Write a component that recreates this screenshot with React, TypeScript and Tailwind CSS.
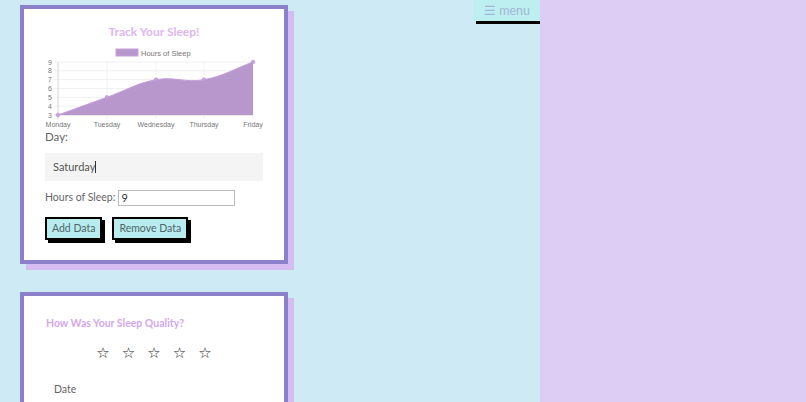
import React from 'react';

const days = ['Monday', 'Tuesday', 'Wednesday', 'Thursday', 'Friday'];
const xs = [13, 62, 111, 159, 208];
const yOf = (v: number) => 73 - (v - 3) * (53 / 6);
const hours = [3, 5, 7, 7, 9];

function SleepChart() {
  const area =
    'M13,73 C32.6,65.9 42.4,62.4 62,55.3 C81.6,48.2 90.8,41.4 111,37.7 C129.6,34.3 140.4,41.1 159,37.7 C179.2,34 188.4,27.1 208,20';
  return (
    <svg width="218" height="90" viewBox="0 0 218 90" className="block" style={{ fontFamily: '"Liberation Sans", Arial, sans-serif' }}>
      {/* legend */}
      <rect x="71" y="7" width="22" height="7" fill="#b897cc" stroke="#c6a3dc" strokeWidth="1" />
      <text x="96" y="13.5" fontSize="7.5" fill="#777">Hours of Sleep</text>

      {/* grid */}
      {[3, 4, 5, 6, 7, 8, 9].map(v => (
        <g key={v}>
          <line x1="9" x2="208" y1={yOf(v)} y2={yOf(v)} stroke="#ececec" strokeWidth="0.8" />
          <text x="7" y={yOf(v) + 2.5} fontSize="7" fill="#777" textAnchor="end">{v}</text>
        </g>
      ))}
      {xs.map(x => (
        <line key={x} x1={x} x2={x} y1="20" y2="77" stroke="#ececec" strokeWidth="0.8" />
      ))}
      <line x1="13" x2="13" y1="20" y2="77" stroke="#d6d6d6" strokeWidth="0.8" />
      <line x1="9" x2="208" y1="73" y2="73" stroke="#d6d6d6" strokeWidth="0.8" />

      {/* data */}
      <path d={`${area} L208,73 L13,73 Z`} fill="#b897cc" />
      <path d={area} fill="none" stroke="#c49fdc" strokeWidth="1" />
      {xs.map((x, i) => (
        <circle key={x} cx={x} cy={yOf(hours[i])} r="1.8" fill="#c9a3e0" stroke="#b58ed0" strokeWidth="0.6" />
      ))}

      {days.map((d, i) => (
        <text key={d} x={xs[i]} y="85" fontSize="7" fill="#777" textAnchor="middle">{d}</text>
      ))}
    </svg>
  );
}

function Card({ children, className = '' }: { children: React.ReactNode; className?: string }) {
  return (
    <div className={`w-[268px] bg-white border-4 border-[#8b80c9] shadow-[6px_6px_0_#d6bdf1] ${className}`}>
      {children}
    </div>
  );
}

export default function App() {
  return (
    <div className="flex h-[402px] overflow-hidden" style={{ fontFamily: 'Lato, "Open Sans", sans-serif' }}>
      <div className="w-[540px] bg-[#cdeaf5] flex justify-between">
        <div className="pl-5 pt-[5px] flex flex-col gap-7">
          {/* Track card */}
          <Card>
            <div className="px-[21px] pt-[15px] pb-[20px]">
              <h1 className="text-center text-[12px] font-bold text-[#e0b6ef] leading-4 mb-[2px]">Track Your Sleep!</h1>
              <SleepChart />
              <div className="text-[11.5px] text-[#666] leading-4 -mt-[3px]">Day:</div>
              <div className="mt-[8px] h-[28px] bg-[#f4f4f4] flex items-center px-2 text-[11px] text-[#555]">
                Saturday<span className="inline-block w-px h-[12px] bg-[#333]" />
              </div>
              <div className="mt-[9px] flex items-center gap-[3px] text-[10.5px] text-[#666]">
                <span>Hours of Sleep:</span>
                <div className="w-[117px] h-[16px] border border-[#bbb] flex items-center px-[2px] text-[11px] text-[#333]">9</div>
              </div>
              <div className="mt-[11px] flex gap-[10px]">
                <button className="h-[23px] px-[5px] border-2 border-black bg-[#b9ecef] text-[10.5px] text-[#4d6566] shadow-[3px_3px_0_#000]">Add Data</button>
                <button className="h-[23px] px-[5px] border-2 border-black bg-[#b9ecef] text-[10.5px] text-[#4d6566] shadow-[3px_3px_0_#000]">Remove Data</button>
              </div>
            </div>
          </Card>

          {/* Quality card */}
          <Card>
            <div className="px-[22px] pt-[19px] pb-10 h-[200px]">
              <h2 className="text-[10.5px] font-bold text-[#d3a8ec] leading-4">How Was Your Sleep Quality?</h2>
              <div className="mt-[14px] flex justify-center gap-[12px] text-[15px] text-[#222] leading-4">
                {[0, 1, 2, 3, 4].map(i => (
                  <span key={i} style={{ fontFamily: '"DejaVu Sans", sans-serif' }}>☆</span>
                ))}
              </div>
              <div className="mt-[21px] pl-2 text-[10.5px] text-[#666]">Date</div>
            </div>
          </Card>
        </div>

        <button className="self-start h-[21px] px-[11px] bg-[#bdeef0] text-[12.5px] text-[#a3b6d8] leading-[21px] shadow-[3px_3px_0_#000] -mr-px">
          ☰ menu
        </button>
      </div>
      <div className="flex-1 bg-[#ddcdf4]" />
    </div>
  );
}
